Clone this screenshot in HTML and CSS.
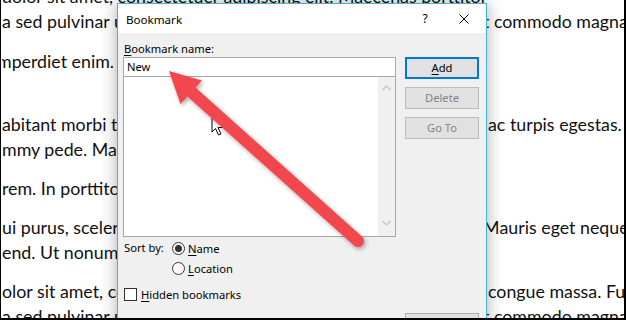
FILE: index.html
```html
<!DOCTYPE html>
<html lang="en">
<head>
    <meta charset="UTF-8">
    <title>Bookmark</title>
    <link rel="stylesheet" href="styles.css">
</head>
<body>
    <div class="screen">
        <div class="doc">
            <p class="para first">
                <span class="line"><span class="l">dolor sit amet, consectetuer adipiscing elit. Maecenas porttitor congue massa. Fusce posuere, magna</span></span>
                <span class="line"><span class="l">a sed pulvinar ultricies, purus</span><span class="r"><span class="cut">t</span> commodo magna eros quis urna.</span></span>
            </p>
            <p class="para tall">
                <span class="line"><span class="l"><span class="cut">m</span>perdiet enim. Fusce est.</span></span>
            </p>
            <p class="para">
                <span class="line"><span class="l">abitant morbi tristique senectus</span><span class="r">ac turpis egestas. Proin</span></span>
                <span class="line"><span class="l">mmy pede. Mauris et orci.</span></span>
            </p>
            <p class="para">
                <span class="line"><span class="l">rem. In porttitor. Donec</span></span>
            </p>
            <p class="para">
                <span class="line"><span class="l">ui purus, scelerisque at</span><span class="r"><span class="cut">M</span>auris eget neque at</span></span>
                <span class="line"><span class="l">end. Ut nonummy.</span></span>
            </p>
            <p class="para">
                <span class="line"><span class="l">olor sit amet, consectetuer</span><span class="r">congue massa. Fusce</span></span>
                <span class="line"><span class="l">a sed pulvinar ultricies, purus</span><span class="r"><span class="cut">t</span> commodo magna eros</span></span>
            </p>
        </div>

        <div class="dialog">
            <div class="titlebar">
                <span class="title">Bookmark</span>
                <span class="help">?</span>
                <span class="close">
                    <svg width="10" height="10" viewBox="0 0 10 10">
                        <path d="M0.5 0.5 L9.5 9.5 M9.5 0.5 L0.5 9.5" stroke="#000" stroke-width="1" fill="none"/>
                    </svg>
                </span>
            </div>
            <div class="dialog-body">
                <div class="left-col">
                    <div class="label"><u>B</u>ookmark name:</div>
                    <div class="name-input">New</div>
                    <div class="list">
                        <div class="scrollbar">
                            <svg width="9" height="6" viewBox="0 0 9 6"><path d="M0.5 5 L4.5 1 L8.5 5" stroke="#c2c2c2" stroke-width="1.2" fill="none"/></svg>
                            <svg width="9" height="6" viewBox="0 0 9 6"><path d="M0.5 1 L4.5 5 L8.5 1" stroke="#c2c2c2" stroke-width="1.2" fill="none"/></svg>
                        </div>
                    </div>
                    <div class="sort">
                        <span class="sort-label">Sort by:</span>
                        <div class="radios">
                            <div class="option"><span class="radio checked"></span><span><u>N</u>ame</span></div>
                            <div class="option"><span class="radio"></span><span><u>L</u>ocation</span></div>
                        </div>
                    </div>
                    <div class="option hidden-opt"><span class="checkbox"></span><span><u>H</u>idden bookmarks</span></div>
                </div>
                <div class="buttons">
                    <div class="btn default"><u>A</u>dd</div>
                    <div class="btn disabled">Delete</div>
                    <div class="btn disabled">Go To</div>
                    <div class="btn bottom">Cancel</div>
                </div>
            </div>
        </div>

        <svg class="overlay" width="626" height="320" viewBox="0 0 626 320">
            <defs>
                <filter id="shadow" x="-20%" y="-20%" width="140%" height="140%">
                    <feDropShadow dx="1.5" dy="2" stdDeviation="2" flood-color="#000" flood-opacity="0.35"/>
                </filter>
            </defs>
            <path d="M211 116 L211 132 L214.5 128.5 L217.5 135 L220 134 L217 127.5 L222 127.5 Z" fill="#fff" stroke="#000" stroke-width="1"/>
            <g filter="url(#shadow)" fill="#f2474e">
                <line x1="186" y1="88" x2="357" y2="241" stroke="#f2474e" stroke-width="12" stroke-linecap="round"/>
                <polygon points="168,71 179.5,104 201,80.5"/>
            </g>
        </svg>
    </div>
</body>
</html>
```

FILE: styles.css
```css
:root {
    --dlg-bg: #f0f0f0;
    --dlg-border: #3fb5d2;
    --field-border: #a8a8a8;
    --btn-bg: #e1e1e1;
    --btn-border: #adadad;
    --accent-blue: #0078d7;
    --disabled-text: #838383;
}

html, body {
    margin: 0;
    background: #fff;
}

.screen {
    position: relative;
    width: 626px;
    height: 320px;
    box-sizing: border-box;
    border-left: 1px solid #000;
    border-right: 2px solid #000;
    border-bottom: 2px solid #000;
    overflow: hidden;
}

/* document behind the dialog */
.doc {
    margin-top: -16px;
    padding-left: 1px;
    font-family: Lato, "Liberation Sans", sans-serif;
    font-size: 17.8px;
    color: #111;
}

.para {
    margin: 0 0 14px;
    display: flex;
    flex-direction: column;
}

.para.first {
    margin-bottom: 15px;
}

.para.tall {
    margin-bottom: 38px;
}

.line {
    display: flex;
    height: 25px;
    line-height: 25px;
    white-space: nowrap;
}

.l {
    flex: 0 0 485px;
    overflow: hidden;
}

.r {
    flex: 1;
    overflow: hidden;
    padding-left: 1px;
}

.cut {
    display: inline-block;
    margin-left: -5px;
}

/* dialog window */
.dialog {
    position: absolute;
    left: 116px;
    top: 3px;
    width: 370px;
    height: 340px;
    box-sizing: border-box;
    border: 1px solid var(--dlg-border);
    background: var(--dlg-bg);
    box-shadow: 0 0 16px rgba(0, 0, 0, 0.32);
    font-family: "Noto Sans", "Open Sans", sans-serif;
    font-size: 11.2px;
    color: #000;
}

.titlebar {
    height: 29px;
    background: #fff;
    display: flex;
    align-items: center;
    padding-left: 8px;
}

.title {
    flex: 1;
    font-size: 11.6px;
    padding-top: 1px;
}

.help {
    width: 20px;
    margin-right: 24px;
    text-align: center;
    font-size: 12px;
}

.close {
    display: flex;
    margin-right: 17px;
}

.dialog-body {
    display: flex;
    padding: 8px 0 0 5px;
}

.left-col {
    width: 273px;
}

.label {
    height: 16px;
    line-height: 15px;
    padding-left: 1px;
}

u {
    text-decoration-thickness: 1px;
    text-underline-offset: 2px;
}

.name-input {
    height: 20px;
    box-sizing: border-box;
    border: 1px solid var(--field-border);
    background: #fff;
    padding-left: 3px;
    line-height: 18px;
}

.list {
    height: 160px;
    box-sizing: border-box;
    border: 1px solid var(--field-border);
    border-top: none;
    background: #fff;
    display: flex;
    justify-content: flex-end;
}

.scrollbar {
    width: 17px;
    background: var(--dlg-bg);
    display: flex;
    flex-direction: column;
    justify-content: space-between;
    align-items: center;
    padding: 8px 0 10px;
}

.sort {
    display: flex;
    margin-top: 1px;
}

.sort-label {
    width: 48px;
    padding-left: 1px;
    line-height: 20px;
}

.option {
    display: flex;
    align-items: center;
    gap: 3px;
    height: 20px;
}

.radio {
    width: 13px;
    height: 13px;
    box-sizing: border-box;
    border: 1px solid #333;
    border-radius: 50%;
    background: #fff;
    display: flex;
    align-items: center;
    justify-content: center;
}

.radio.checked::after {
    content: "";
    width: 7px;
    height: 7px;
    border-radius: 50%;
    background: #333;
}

.hidden-opt {
    margin-top: 6px;
    padding-left: 1px;
    gap: 4px;
}

.checkbox {
    width: 13px;
    height: 13px;
    box-sizing: border-box;
    border: 1px solid #333;
    background: #fff;
}

.buttons {
    margin-left: 9px;
    margin-top: 16px;
    display: flex;
    flex-direction: column;
    gap: 8px;
}

.btn {
    width: 74px;
    height: 22px;
    box-sizing: border-box;
    border: 1px solid var(--btn-border);
    background: var(--btn-bg);
    text-align: center;
    line-height: 20px;
}

.btn.default {
    border: 2px solid var(--accent-blue);
    line-height: 18px;
}

.btn.disabled {
    color: var(--disabled-text);
    border-color: #bcbcbc;
}

.btn.bottom {
    margin-top: 166px;
}

.overlay {
    position: absolute;
    left: 0;
    top: 0;
    pointer-events: none;
}
```
